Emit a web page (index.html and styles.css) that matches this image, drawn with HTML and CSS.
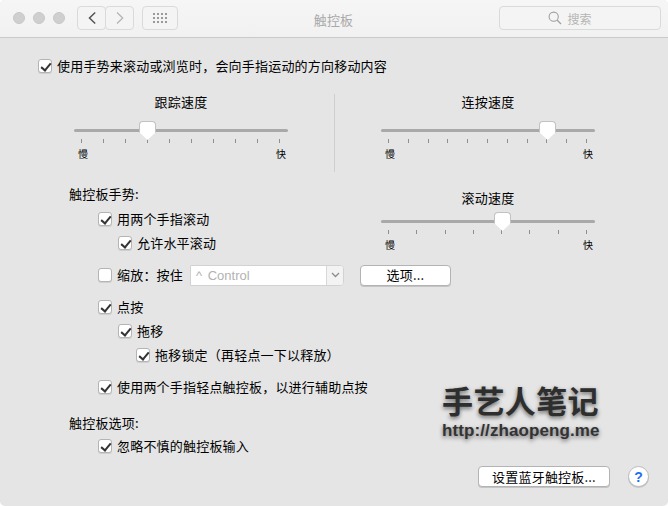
FILE: index.html
```html
<!DOCTYPE html>
<html lang="zh-CN">
<head>
<meta charset="utf-8">
<title>触控板</title>
<link rel="stylesheet" href="styles.css">
</head>
<body>
<div class="window">
  <header class="titlebar">
    <div class="lights"><i class="light"></i><i class="light"></i><i class="light"></i></div>
    <div class="nav">
      <button class="tool tool-back"><svg width="10" height="14" viewBox="0 0 10 14"><path d="M8.2 1.5 2.5 7l5.7 5.5" fill="none" stroke="#555" stroke-width="1.5"/></svg></button>
      <button class="tool tool-fwd"><svg width="10" height="14" viewBox="0 0 10 14"><path d="M2 1.5 7.7 7 2 12.5" fill="none" stroke="#b5b5b5" stroke-width="1.3"/></svg></button>
    </div>
    <button class="tool tool-grid"><svg width="15" height="11" viewBox="0 0 15 11" fill="#9a9a9a"><rect x="0" y="0" width="2" height="2"/><rect x="4" y="0" width="2" height="2"/><rect x="8" y="0" width="2" height="2"/><rect x="12" y="0" width="2" height="2"/><rect x="0" y="4" width="2" height="2"/><rect x="4" y="4" width="2" height="2"/><rect x="8" y="4" width="2" height="2"/><rect x="12" y="4" width="2" height="2"/><rect x="0" y="8" width="2" height="2"/><rect x="4" y="8" width="2" height="2"/><rect x="8" y="8" width="2" height="2"/><rect x="12" y="8" width="2" height="2"/></svg></button>
    <div class="title">触控板</div>
    <div class="search"><svg width="14" height="14" viewBox="0 0 14 14"><circle cx="5.7" cy="5.7" r="4.6" fill="none" stroke="#a0a0a0" stroke-width="1.1"/><path d="M9 9l4 4" stroke="#a0a0a0" stroke-width="1.3"/></svg><span>搜索</span></div>
  </header>

  <main class="pane">
    <label class="check top-check"><i class="box on"></i>使用手势来滚动或浏览时，会向手指运动的方向移动内容</label>

    <section class="speeds">
      <div class="slider">
        <div class="slider-title">跟踪速度</div>
        <div class="track"><i class="thumb thumb-track"></i></div>
        <div class="ticks"><i></i><i></i><i></i><i></i><i></i><i></i><i></i><i></i><i></i><i></i></div>
        <div class="ends"><span>慢</span><span>快</span></div>
      </div>
      <div class="divider"></div>
      <div class="slider">
        <div class="slider-title">连按速度</div>
        <div class="track"><i class="thumb thumb-click"></i></div>
        <div class="ticks"><i></i><i></i><i></i><i></i><i></i><i></i><i></i><i></i><i></i><i></i><i></i></div>
        <div class="ends"><span>慢</span><span>快</span></div>
      </div>
    </section>

    <section class="gestures">
      <div class="gesture-list">
        <div class="group-title">触控板手势:</div>
        <label class="check lvl1 row-scroll"><i class="box on"></i>用两个手指滚动</label>
        <label class="check lvl2 row-horiz"><i class="box on"></i>允许水平滚动</label>
      </div>
      <div class="slider slider-scroll">
        <div class="slider-title">滚动速度</div>
        <div class="track"><i class="thumb thumb-scroll"></i></div>
        <div class="ticks"><i></i><i></i><i></i><i></i><i></i><i></i><i></i><i></i></div>
        <div class="ends"><span>慢</span><span>快</span></div>
      </div>
      <div class="zoom-row">
        <label class="check lvl1"><i class="box"></i>缩放：按住</label>
        <div class="select"><span class="select-value">^ Control</span><span class="select-arrow"><svg width="9" height="6" viewBox="0 0 9 6"><path d="M1 1l3.5 3.5L8 1" fill="none" stroke="#8c8c8c" stroke-width="1.3"/></svg></span></div>
        <button class="btn btn-options">选项...</button>
      </div>
    </section>

    <section class="rest">
      <label class="check lvl1 row-tap"><i class="box on"></i>点按</label>
      <label class="check lvl2 row-drag"><i class="box on"></i>拖移</label>
      <label class="check lvl3 row-lock"><i class="box on"></i>拖移锁定（再轻点一下以释放）</label>
      <label class="check lvl1 row-second"><i class="box on"></i>使用两个手指轻点触控板，以进行辅助点按</label>
      <div class="group-title options-title">触控板选项:</div>
      <label class="check lvl1 row-palm"><i class="box on"></i>忽略不慎的触控板输入</label>
    </section>

    <footer class="footer">
      <button class="btn btn-bt">设置蓝牙触控板...</button>
      <button class="help">?</button>
    </footer>

    <div class="watermark">
      <div class="wm-cn">手艺人笔记</div>
      <div class="wm-url">http://zhaopeng.me</div>
    </div>
  </main>
</div>
</body>
</html>
```

FILE: styles.css
```css
* { box-sizing: border-box; }
html, body { margin: 0; height: 100%; background: #fff; }
body { font-family: "Noto Sans CJK SC", "Liberation Sans", sans-serif; font-size: 13px; letter-spacing: .2px; color: #000; overflow: hidden; }
i { display: block; }

.window { width: 668px; height: 506px; display: flex; flex-direction: column; border-radius: 5px; overflow: hidden; background: #e5e5e5; }

.titlebar { height: 38px; flex: none; display: flex; align-items: center; padding: 0 7px 1px 13px; background: linear-gradient(#f6f6f6, #f1f1f1); border-bottom: 1px solid #c9c9c9; position: relative; }
.lights { display: flex; gap: 8px; }
.light { width: 12px; height: 12px; border-radius: 50%; background: #cfcfcf; border: 1px solid #c8c8c8; }
.nav { display: flex; margin-left: 12px; }
.tool { height: 24px; padding: 0; display: flex; align-items: center; justify-content: center; background: #f4f4f4; border: 1px solid #dadada; border-radius: 4px; }
.tool-back { width: 29px; }
.tool-fwd { width: 29px; margin-left: -1px; }
.tool-grid { width: 36px; margin-left: 8px; }
.title { position: absolute; left: 0; right: 1px; top: 10px; text-align: center; line-height: 20px; color: #a9a9a9; font-size: 13px; }
.search { margin-left: auto; width: 162px; height: 24px; display: flex; align-items: center; justify-content: center; gap: 5px; padding-right: 20px; border: 1px solid #dadada; border-radius: 4px; background: #f4f4f4; color: #b4b4b4; font-size: 12px; letter-spacing: 0; }

.pane { flex: 1; position: relative; padding: 0 0 0 38px; display: flex; flex-direction: column; }

.check { display: flex; align-items: center; height: 20px; line-height: 20px; white-space: nowrap; }
.box { width: 14px; height: 14px; flex: none; margin-right: 5px; border: 1px solid #b4b4b4; border-radius: 3px; background: #fff; box-shadow: 0 1px 0 #cfcfcf; position: relative; }
.box.on::after { content: ""; position: absolute; left: 4px; top: 1px; width: 4px; height: 8px; border: solid #333; border-width: 0 2px 2px 0; transform: rotate(40deg); }

.top-check { margin-top: 18px; }

.speeds { display: flex; margin: 18px 0 0 36px; height: 78px; }
.slider { width: 214px; flex: none; display: flex; flex-direction: column; }
.divider { width: 1px; height: 78px; background: #cfcfcf; margin: 0 46px; }
.slider-title { height: 20px; line-height: 20px; text-align: center; font-size: 13px; margin-top: -2px; }
.track { height: 3px; margin-top: 17px; border-radius: 2px; background: #a9a9a9; position: relative; }
.thumb { position: absolute; top: -8px; width: 17px; height: 19px; background: #fff; border: 1px solid #c2c2c2; border-bottom: 0; border-radius: 4px 4px 0 0; clip-path: polygon(0 0, 100% 0, 100% 58%, 50% 100%, 0 58%); filter: drop-shadow(0 1px 0 #aaa); }
.thumb-track { left: 65px; }
.thumb-click { left: 158px; }
.thumb-scroll { left: 113px; }
.ticks { display: flex; justify-content: space-between; padding: 0 8px 0 7px; margin-top: 7px; }
.ticks i { width: 1px; height: 4px; background: #8f8f8f; }
.ends { display: flex; justify-content: space-between; padding: 0 2px 0 4px; margin-top: 4px; line-height: 14px; font-size: 10px; letter-spacing: 0; }

.gestures { display: grid; grid-template-columns: 312px 214px; margin: 12px 0 0 31px; }
.gesture-list { display: flex; flex-direction: column; }
.group-title { height: 20px; line-height: 20px; }
.lvl1 { margin-left: 29px; }
.lvl2 { margin-left: 49px; }
.lvl3 { margin-left: 67px; }
.row-scroll { margin-top: 5px; }
.row-horiz { margin-top: 4px; }
.slider-scroll { margin-top: 6px; }
.slider-scroll .track { margin-top: 12px; }
.zoom-row { grid-column: 1 / -1; display: flex; align-items: center; margin-top: 11px; height: 22px; }
.select { width: 154px; height: 21px; margin-left: 7px; display: flex; border: 1px solid #d2d2d2; border-radius: 0 4px 4px 0; background: #fff; }
.select-value { flex: 1; padding-left: 5px; font-family: "Liberation Sans", sans-serif; color: #b2b2b2; font-size: 13px; line-height: 19px; word-spacing: 2px; letter-spacing: 0; }
.select-arrow { width: 17px; display: flex; align-items: center; justify-content: center; background: #f3f3f3; border-left: 1px solid #d8d8d8; border-radius: 0 3px 3px 0; }
.btn { padding: 0; font: inherit; letter-spacing: inherit; color: #000; background: #fff; border: 1px solid #b3b3b3; border-radius: 4px; height: 21px; line-height: 18px; box-shadow: 0 1px 0 #c4c4c4; }
.btn-options { width: 91px; margin-left: 16px; }

.rest { display: flex; flex-direction: column; margin-left: 31px; }
.row-tap { margin-top: 11px; }
.row-drag, .row-lock { margin-top: 4px; }
.row-second { margin-top: 12px; }
.options-title { margin-top: 16px; }
.row-palm { margin-top: 3px; }

.footer { display: flex; align-items: center; margin-top: auto; padding: 0 19px 19px 0; justify-content: flex-end; gap: 18px; }
.btn-bt { width: 132px; }
.help { width: 21px; height: 21px; padding: 0; border-radius: 50%; border: 1px solid #bcbcbc; background: #fff; box-shadow: 0 1px 0 #c4c4c4; color: #1f6ff0; font: bold 14px/18px "Liberation Sans", sans-serif; }

.watermark { position: absolute; left: 442px; top: 344px; color: #2e2e2e; font-weight: 700; text-shadow: 0 2px 4px rgba(0,0,0,.55); }
.wm-cn { font-size: 31px; line-height: 36px; letter-spacing: .4px; }
.wm-url { font-family: "Liberation Sans", sans-serif; font-size: 17px; line-height: 20px; margin-top: 3px; color: #333; letter-spacing: .1px; }
```
